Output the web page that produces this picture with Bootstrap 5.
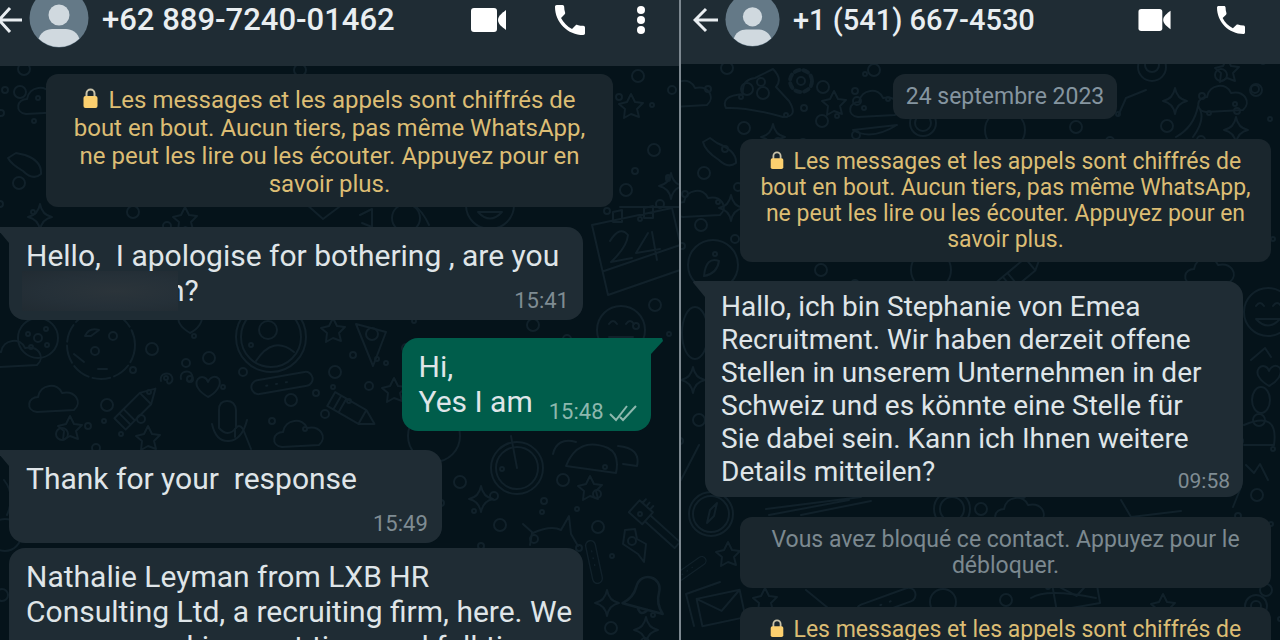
<!DOCTYPE html>
<html lang="fr">
<head>
<meta charset="utf-8">
<meta name="viewport" content="width=device-width, initial-scale=1">
<title>Conversations</title>
<link href="https://cdn.jsdelivr.net/npm/bootstrap@5.3.0/dist/css/bootstrap.min.css" rel="stylesheet">
<style>
body{background:#05131a;color:#dfe5e8;font-family:Roboto,"Liberation Sans",sans-serif}
.pane{--body:30px;--body-lh:35px;--note:24px;--note-lh:28px;--stamp:22px;--head:31px;flex:679 1 0;min-width:0}
.pane-b{--body:28px;--body-lh:33px;--note:23px;--note-lh:26px;--stamp:21px;--head:29px;flex:599 1 0;border-left:2px solid #7d8890}
.topbar{background:#1f2c34;padding-bottom:26px}
.pane-b .topbar{padding-bottom:24px}
.topbar-row{height:40px}
.topbar h1{font-size:var(--head);font-weight:500;line-height:40px;color:#e9eef1}
.topbar button,.topbar a{color:#fff;line-height:0}
.avatar{width:60px;height:60px;margin:-12px 13px -8px 7px}
.pane-b .avatar{width:55px;height:55px;margin:-8px 13px -7px 7px}
.doodles{fill:none;stroke:#11212a;stroke-width:2;stroke-linecap:round;stroke-linejoin:round}
.note{background:#1a262d;color:#dcbd74;border-radius:12px;font-size:var(--note);line-height:var(--note-lh);padding:12px 20px 9px;margin:8px 66px 20px 46px}
.pane-b .note{padding:10px 18px 9px;margin:0 9px 19px 59px}
.pane-b .note-grey{color:#7c8990}
.day{background:#1a262d;color:#8595a0;border-radius:12px;font-size:23px;font-weight:400;line-height:26px;padding:10px 13px 9px;margin:10px 0 20px 49px}
.bubble{background:#1f2c34;border-radius:16px;font-size:var(--body);line-height:var(--body-lh);padding:11px 14px 7px 17px}
.bubble-in{margin-left:9px}
.bubble-wide{width:100%;max-width:574px;padding-right:8px}
.bubble-out{background:#005d4b;margin-right:28px}
.pane-b .bubble{padding:9px 7px 4px 16px;max-width:538px;margin-left:24px}
.tail-in{border-top-left-radius:0}
.tail-out{border-top-right-radius:0}
.tail-in::before,.tail-out::before{content:"";position:absolute;top:0;width:12px;height:16px;background:inherit}
.tail-in::before{right:100%;clip-path:polygon(100% 0,8% 0,0 10%,100% 100%)}
.tail-out::before{left:100%;clip-path:polygon(0 0,92% 0,100% 18%,0 100%)}
.bubble p{padding-bottom:5px;white-space:pre-line}
.two-lines{min-height:75px}
.bubble .keep{white-space:pre}
.stamp{font-size:var(--stamp);line-height:24px;color:#7f8c93}
.stamp-under{margin:-24px 6px 0 auto;width:fit-content}
.bubble-out .stamp{color:#8db8ae}
.redacted{width:156px;height:40px;margin:-2px -10px -3px -4px;vertical-align:top;background:radial-gradient(ellipse at 60% 50%,#2b343a,#253038 55%,#212b32)}
</style>
</head>
<body class="vh-100 overflow-hidden">
<svg width="0" height="0" class="position-absolute" aria-hidden="true">
<defs>
<g id="star"><path d="M0-12 4-4 12-3 6 3 8 11 0 8-7 12-6 3-12-2-4-4Z"/></g>
<g id="spark"><path d="M0-13Q2-2 12 0 2 2 0 13-2 2-12 0-2-2 0-13Z"/></g>
<g id="heart"><path d="M0 11C-10 5-14-2-10-7-6-11-1-8 0-4 2-9 7-11 11-7 14-1 8 7 0 11Z"/></g>
<g id="cloud"><path d="M-18 12C-30 10-27-3-17-3-15-16 3-18 7-7 20-10 28 2 19 10Z"/></g>
<g id="pen"><path d="M-24-8H12L26 0 12 8H-24ZM-17-8V8M-11-8V8M12-8V8"/></g>
<g id="face"><circle r="24"/><path d="M-12-6q4-6 8 0M5-6q4-6 8 0M-12 7Q0 20 12 7Z"/></g>
<g id="wheel"><circle r="26"/><circle r="21"/><path d="M0 0-6-32"/></g>
<g id="bell"><path d="M-16 10Q-9 4-9-5C-9-18 9-18 9-5Q9 4 16 10ZM-4 10q4 7 8 0"/></g>
<g id="mail"><path d="M-22-14H22V14H-22ZM-22-14 0 3 22-14"/></g>
<g id="clip"><path d="M-24-7H24a7 7 0 0 1 0 14H-24a7 7 0 0 1 0-14M-16 0h1M-6 0h1M4 0h1"/></g>
<g id="brush"><path d="M-28-8H-10V8H-28ZM-10-4H30V4H-10M-24-8v-5M-19-8v-5M-14-8v-5"/></g>
<g id="dots"><circle r="6"/><circle cx="34" cy="14" r="4"/><circle cx="14" cy="29" r="2"/><circle cx="-19" cy="21" r="3"/><circle cx="42" cy="-13" r="2"/></g>
</defs>
</svg>

<main class="d-flex h-100">
<section class="pane position-relative d-flex flex-column overflow-hidden" aria-label="Conversation 1">
<svg class="doodles position-absolute top-0 start-0 w-100 h-100" aria-hidden="true">
<use href="#dots" x="20" y="92"/><use href="#dots" x="19" y="183"/><use href="#dots" x="133" y="212"/><use href="#dots" x="638" y="76"/><use href="#dots" x="654" y="150"/><use href="#dots" x="626" y="190"/><use href="#dots" x="152" y="349"/><use href="#dots" x="209" y="358"/><use href="#dots" x="107" y="405"/><use href="#dots" x="291" y="400"/><use href="#dots" x="335" y="372"/><use href="#dots" x="62" y="434"/><use href="#dots" x="460" y="482"/><use href="#dots" x="500" y="525"/><use href="#dots" x="598" y="527"/><use href="#dots" x="611" y="628"/><use href="#dots" x="563" y="480"/><use href="#dots" x="372" y="334"/><use href="#dots" x="533" y="325"/><use href="#dots" x="655" y="305"/><use href="#dots" x="24" y="69"/><use href="#dots" x="300" y="70"/>
<use href="#star" x="631" y="106"/><use href="#star" x="333" y="330"/><use href="#star" x="70" y="428"/><use href="#star" x="148" y="438"/><use href="#star" x="590" y="488"/><use href="#star" x="185" y="219"/><use href="#star" x="394" y="390"/>
<use href="#spark" x="671" y="186"/><use href="#spark" x="481" y="499"/><use href="#spark" x="607" y="603"/><use href="#spark" x="646" y="630"/><use href="#spark" x="40" y="217"/>
<use href="#heart" x="208" y="386"/><use href="#heart" x="190" y="322"/>
<use href="#cloud" x="44" y="102"/><use href="#cloud" x="55" y="400"/><use href="#cloud" x="18" y="355"/><use href="#cloud" x="300" y="435"/>
<use href="#face" x="621" y="330"/><use href="#face" x="490" y="205"/>
<circle cx="38" cy="338" r="20"/><circle cx="38" cy="338" r="4"/><circle cx="28" cy="334" r="2"/><circle cx="46" cy="329" r="2"/><circle cx="47" cy="345" r="2"/><circle cx="31" cy="347" r="2"/>
<circle cx="101" cy="345" r="34" stroke-dasharray="18 4"/><circle cx="95" cy="351" r="4"/><circle cx="113" cy="336" r="4"/><path d="M85 336q4-9 14-6l-8 6zM74 354l10 8M98 369h9"/>
<circle cx="271" cy="337" r="35"/><circle cx="271" cy="337" r="30"/><circle cx="268" cy="330" r="9"/><path d="M256 361Q273 335 294 352"/>
<use href="#pen" transform="translate(137 407) rotate(-45)"/><use href="#pen" transform="translate(352 411) rotate(30)"/>
<use href="#clip" transform="translate(282 383) rotate(-10)"/><use href="#clip" transform="translate(594 562) rotate(78) scale(.7)"/>
<path d="M161 381c-2-8 9-10 11-4s-5 9-5 4M181 379c-2-8 9-10 11-4s-5 9-5 4M356 324l17 42 13-34zM219 410q0-9 8-9t9 9v18q-8 10-17 0zM212 424q4 18 17 17t18-21"/>
<circle cx="434" cy="436" r="26"/><use href="#wheel" x="517" y="468"/>
<path d="M566 466q12-30 42-18 12 6 8 25zM553 454q4-17 23-12M618 446q23 2 19 20l-14-2M523 524l10 9q18-8 28-3l8-14 2 18 7 12M530 545l2-12M625 530l-2 14 15 10 6 8 2-18-9-5-2-10z"/>
<use href="#brush" transform="translate(655 525) rotate(42)"/><use href="#bell" transform="translate(646 596) rotate(15) scale(1.3)"/>
<path d="M592 225l80-17 14 60-78 27zM604 271l76-26M613 212v10h9v-12zM644 208v10h9v-12zM610 241q10-16 18-6-1 12-17 27l21-4M648 233l-12 20 24-4M652 232l5 28"/>
<path d="M8 158l8-5 9 2q17 6 16 19-8 7-18-3-12-7-15-13zM305 203l18 16 20-15M360 215l12-6v18l-10-4M395 205q20-10 34 20"/><circle cx="406" cy="218" r="14"/><circle cx="5" cy="535" r="16"/><circle cx="2" cy="595" r="6"/>
<path d="M4 480q12 15 3 35M235 437v-8q4-6 8 0l8 20M620 207h60"/>
</svg>
<header class="topbar position-relative">
<div class="topbar-row d-flex align-items-center">
<a href="#" aria-label="Retour"><svg width="22" height="28" viewBox="2 0 22 28" fill="none" stroke="#e9eef1" stroke-width="3"><path d="M24 14H2M12 2 1 14 12 26"/></svg></a>
<svg class="avatar flex-shrink-0" viewBox="0 0 60 60" aria-hidden="true"><defs><clipPath id="disc"><circle cx="30" cy="30" r="29"/></clipPath></defs><circle cx="30" cy="30" r="29.500" fill="#647987"/><g fill="#d0d9df" clip-path="url(#disc)"><circle cx="30" cy="27" r="10.500"/><path d="M9 54C10 44 18 41 23 41H37C42 41 50 44 51 54V60H9Z"/></g></svg>
<h1 class="mb-0 me-auto text-nowrap">+62 889-7240-01462</h1>
<button class="btn p-0 border-0" aria-label="Appel vidéo"><svg width="35" height="24" viewBox="0 0 35 24" fill="currentColor"><rect width="26" height="24" rx="3"/><path d="M27 12C27 8 31 5 35 2V22C31 19 27 16 27 12Z"/></svg></button>
<button class="btn p-0 border-0" style="margin-left:49px" aria-label="Appeler"><svg width="30" height="30" viewBox="3 3 18 18" fill="currentColor"><path d="M6.620 10.790c1.440 2.830 3.760 5.140 6.590 6.590l2.200-2.200c.27-.27.67-.36 1.020-.24 1.120.37 2.330.57 3.570.57.55 0 1 .45 1 1V20c0 .55-.45 1-1 1-9.390 0-17-7.610-17-17 0-.55.45-1 1-1h3.500c.55 0 1 .45 1 1 0 1.250.2 2.450.57 3.570.11.35.03.74-.25 1.020z"/></svg></button>
<button class="btn p-0 border-0" style="margin:0 34px 0 52px" aria-label="Menu"><svg width="8" height="30" viewBox="0 0 8 30" fill="currentColor"><circle cx="4" cy="5" r="4"/><circle cx="4" cy="15" r="4"/><circle cx="4" cy="25" r="4"/></svg></button>
</div>
</header>
<div class="position-relative d-flex flex-column align-items-start">
<div class="note text-center"><svg width="15" height="20" viewBox="0 0 14 20" class="me-1 align-baseline" aria-hidden="true"><path d="M3 9V5.500a4 4 0 0 1 8 0V9" fill="none" stroke="#c9c2a8" stroke-width="2"/><rect y="8" width="14" height="12" rx="2" fill="#fcd06f"/></svg> Les messages et les appels sont chiffrés de bout en bout. Aucun tiers, pas même WhatsApp, ne peut les lire ou les écouter. Appuyez pour en savoir plus.</div>
<div class="bubble bubble-in bubble-wide tail-in position-relative" style="margin-bottom:18px"><p class="mb-0"><span class="keep">Hello,  I apologise for bothering , are you</span>
<span class="redacted d-inline-block position-relative z-1"></span>n?</p><div class="stamp stamp-under">15:41</div></div>
<div class="bubble bubble-out tail-out position-relative align-self-end d-flex align-items-end gap-3" style="margin-bottom:19px"><p class="mb-0">Hi,
Yes I am</p><div class="stamp">15:48 <svg width="28" height="18" viewBox="0 0 28 18" fill="none" stroke="#8db8ae" stroke-width="2" role="img" aria-label="Distribué"><path d="M1 10 7 16 18 2M11 13 14 16 27 2"/></svg></div></div>
<div class="bubble bubble-in tail-in position-relative d-flex align-items-end gap-3" style="margin-bottom:5px"><p class="mb-0 two-lines keep">Thank for your  response</p><div class="stamp">15:49</div></div>
<div class="bubble bubble-in bubble-wide"><p class="mb-0">Nathalie Leyman from LXB HR
Consulting Ltd, a recruiting firm, here. We
are now seeking part-time and full-time</p></div>
</div>
</section>

<section class="pane pane-b position-relative d-flex flex-column overflow-hidden" aria-label="Conversation 2">
<svg class="doodles position-absolute top-0 start-0 w-100 h-100" aria-hidden="true">
<use href="#dots" x="46" y="68"/><use href="#dots" x="63" y="128"/><use href="#dots" x="142" y="87"/><use href="#dots" x="141" y="121"/><use href="#dots" x="193" y="70"/><use href="#dots" x="23" y="173"/><use href="#dots" x="486" y="126"/><use href="#dots" x="575" y="90"/><use href="#dots" x="395" y="127"/><use href="#dots" x="540" y="75"/><use href="#dots" x="20" y="225"/><use href="#dots" x="140" y="270"/><use href="#dots" x="576" y="495"/><use href="#dots" x="585" y="590"/><use href="#dots" x="325" y="600"/><use href="#dots" x="300" y="509"/><use href="#dots" x="578" y="420"/><use href="#dots" x="578" y="210"/><use href="#dots" x="18" y="420"/>
<path d="M45 108q-6-12 17-14-2-14 12-16l18-9q10 10 3 18l13 14q10 16-6 16-36-10-57-9z"/><circle cx="66" cy="89" r="6"/><circle cx="82" cy="93" r="6"/>
<circle cx="120" cy="81" r="11" stroke-width="4" stroke-dasharray="5 4"/><circle cx="120" cy="81" r="4"/>
<use href="#star" x="153" y="103"/><use href="#star" x="546" y="70"/><use href="#star" x="47" y="554"/><use href="#star" x="84" y="600"/><use href="#star" x="482" y="606"/>
<use href="#cloud" x="195" y="105"/><use href="#cloud" x="543" y="100"/><use href="#cloud" x="7" y="95"/><use href="#cloud" x="20" y="205"/><use href="#cloud" x="340" y="512"/>
<use href="#spark" x="494" y="101"/><use href="#spark" x="555" y="130"/><use href="#spark" x="50" y="208"/><use href="#spark" x="12" y="380"/><use href="#spark" x="92" y="137"/>
<path d="M22 142l7-4 7 5q20 8 19 20-8 6-17-3-14-9-16-18zM172 130q18 11 44-5zM495 137q18-10 22-31 9 12-5 31M437 116l8-18 20-8"/>
<circle cx="242" cy="123" r="13"/><circle cx="242" cy="123" r="8"/><circle cx="471" cy="67" r="14"/><circle cx="471" cy="65" r="7"/><circle cx="324" cy="130" r="20"/>
<circle cx="32" cy="265" r="25"/><path d="M23 276q2-20 15-15-2 13-15 15z"/><ellipse cx="14" cy="333" rx="13" ry="26"/>
<circle cx="30" cy="514" r="22"/><circle cx="30" cy="514" r="18"/><path d="M26 523l3-13 7-7-3 13z"/>
<path d="M85 509l95-12M88 515l80-15M120 515l70-14M440 500l10 17 50-6M0 480l18-35M560 487l-8 20"/><circle cx="271" cy="509" r="18"/><circle cx="271" cy="509" r="12"/>
<use href="#mail" transform="translate(40 608) rotate(-12)"/><path d="M5 594l34-12M5 594l8 32"/><use href="#clip" transform="translate(9 569) rotate(-35) scale(.6)"/>
<use href="#clip" transform="translate(205 603) rotate(-20)"/><use href="#mail" transform="translate(395 593) rotate(-10)"/><circle cx="262" cy="602" r="13"/><circle cx="575" cy="606" r="11"/><circle cx="575" cy="606" r="5"/>
<path d="M125 590l22 18M350 598q15-10 65 0"/><use href="#face" x="587" y="312"/><use href="#heart" x="588" y="375"/><ellipse cx="580" cy="400" rx="9" ry="13"/><path d="M563 425q35-15 30 20h-30M565 465l8 8 6-9 8 16M570 360l14-12 6 9"/><circle cx="250" cy="270" r="20"/><use href="#pen" transform="translate(340 272) rotate(-40)"/><use href="#cloud" x="530" y="272"/>
</svg>
<header class="topbar position-relative">
<div class="topbar-row d-flex align-items-center">
<a href="#" style="margin-left:12px" aria-label="Retour"><svg width="25" height="26" viewBox="0 0 25 26" fill="none" stroke="#e9eef1" stroke-width="3"><path d="M25 13H2M13 2 2 13 13 24"/></svg></a>
<svg class="avatar flex-shrink-0" viewBox="0 0 60 60" aria-hidden="true"><circle cx="30" cy="30" r="29.500" fill="#647987"/><g fill="#d0d9df" clip-path="url(#disc)"><circle cx="30" cy="27" r="10.500"/><path d="M9 54C10 44 18 41 23 41H37C42 41 50 44 51 54V60H9Z"/></g></svg>
<h1 class="mb-0 me-auto text-nowrap">+1 (541) 667-4530</h1>
<button class="btn p-0 border-0" aria-label="Appel vidéo"><svg width="33" height="22" viewBox="0 0 35 24" fill="currentColor"><rect width="26" height="24" rx="3"/><path d="M27 12C27 8 31 5 35 2V22C31 19 27 16 27 12Z"/></svg></button>
<button class="btn p-0 border-0" style="margin:0 35px 0 46px" aria-label="Appeler"><svg width="28" height="28" viewBox="3 3 18 18" fill="currentColor"><path d="M6.620 10.790c1.440 2.830 3.760 5.140 6.590 6.590l2.200-2.200c.27-.27.67-.36 1.020-.24 1.120.37 2.330.57 3.570.57.55 0 1 .45 1 1V20c0 .55-.45 1-1 1-9.390 0-17-7.610-17-17 0-.55.45-1 1-1h3.500c.55 0 1 .45 1 1 0 1.250.2 2.450.57 3.570.11.35.03.74-.25 1.020z"/></svg></button>
</div>
</header>
<div class="position-relative d-flex flex-column">
<div class="day align-self-center">24 septembre 2023</div>
<div class="note text-center"><svg width="14" height="18" viewBox="0 0 14 20" class="me-1 align-baseline" aria-hidden="true"><path d="M3 9V5.500a4 4 0 0 1 8 0V9" fill="none" stroke="#c9c2a8" stroke-width="2"/><rect y="8" width="14" height="12" rx="2" fill="#fcd06f"/></svg> Les messages et les appels sont chiffrés de bout en bout. Aucun tiers, pas même WhatsApp, ne peut les lire ou les écouter. Appuyez pour en savoir plus.</div>
<div class="bubble tail-in position-relative" style="margin-bottom:20px"><p class="mb-0">Hallo, ich bin Stephanie von Emea
Recruitment. Wir haben derzeit offene
Stellen in unserem Unternehmen in der
Schweiz und es könnte eine Stelle für
Sie dabei sein. Kann ich Ihnen weitere
Details mitteilen?</p><div class="stamp stamp-under">09:58</div></div>
<div class="note note-grey text-center">Vous avez bloqué ce contact. Appuyez pour le débloquer.</div>
<div class="note text-center"><svg width="14" height="18" viewBox="0 0 14 20" class="me-1 align-baseline" aria-hidden="true"><path d="M3 9V5.500a4 4 0 0 1 8 0V9" fill="none" stroke="#c9c2a8" stroke-width="2"/><rect y="8" width="14" height="12" rx="2" fill="#fcd06f"/></svg> Les messages et les appels sont chiffrés de bout en bout. Aucun tiers, pas même WhatsApp, ne peut les lire ou les écouter. Appuyez pour en savoir plus.</div>
</div>
</section>
</main>
<script src="https://cdn.jsdelivr.net/npm/bootstrap@5.3.0/dist/js/bootstrap.bundle.min.js"></script>
</body>
</html>
